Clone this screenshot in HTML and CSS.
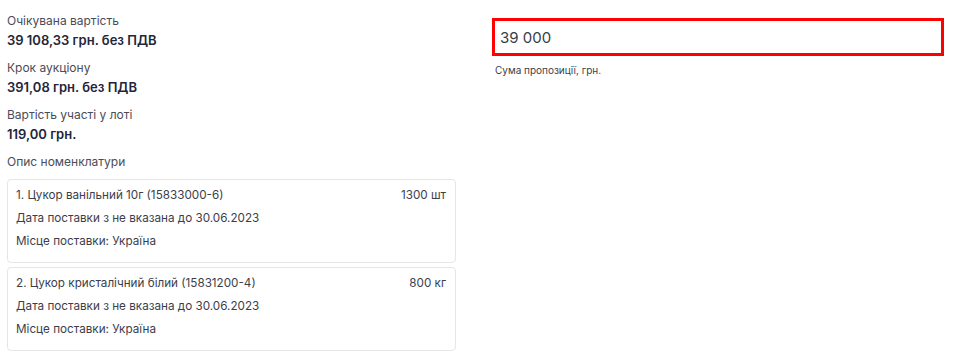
FILE: index.html
```html
<!DOCTYPE html>
<html lang="uk">
<head>
    <meta charset="UTF-8">
    <title>Пропозиція</title>
    <link rel="stylesheet" href="styles.css">
</head>
<body>

<div class="layout">
    <div class="lot-info">
        <div class="field">
            <div class="field-label">Очікувана вартість</div>
            <div class="field-value">39 108,33 грн. без ПДВ</div>
        </div>
        <div class="field">
            <div class="field-label">Крок аукціону</div>
            <div class="field-value">391,08 грн. без ПДВ</div>
        </div>
        <div class="field">
            <div class="field-label">Вартість участі у лоті</div>
            <div class="field-value">119,00 грн.</div>
        </div>

        <div class="field-label items-title">Опис номенклатури</div>

        <div class="item-card">
            <div class="item-row">
                <span>1. Цукор ванільний 10г (15833000-6)</span>
                <span>1300 шт</span>
            </div>
            <div class="item-row">Дата поставки з не вказана до 30.06.2023</div>
            <div class="item-row">Місце поставки: Україна</div>
        </div>

        <div class="item-card">
            <div class="item-row">
                <span>2. Цукор кристалічний білий (15831200-4)</span>
                <span>800 кг</span>
            </div>
            <div class="item-row">Дата поставки з не вказана до 30.06.2023</div>
            <div class="item-row">Місце поставки: Україна</div>
        </div>
    </div>

    <div class="bid-form">
        <input type="text" class="bid-input" id="bidAmount" value="39 000">
        <label for="bidAmount" class="bid-hint">Сума пропозиції, грн.</label>
    </div>
</div>

</body>
</html>
```

FILE: styles.css
```css
body {
    font-family: Inter, "Noto Sans", sans-serif;
    background-color: #fff;
    color: #2b2d3b;
    margin: 0;
}
.layout {
    display: grid;
    grid-template-columns: 449px 452px;
    column-gap: 36px;
    padding: 12px 9px 0 7px;
}
.field {
    margin-bottom: 9px;
}
.field-label {
    font-size: 12px;
    line-height: 18px;
    color: #4a4c57;
}
.field-value {
    font-size: 13px;
    line-height: 20px;
    font-weight: 600;
    color: #23253a;
}
.items-title {
    margin-bottom: 8px;
}
.item-card {
    border: 1px solid #e6e6ea;
    border-radius: 4px;
    padding: 4px 9px 9px 8px;
    margin-bottom: 4px;
}
.item-row {
    display: flex;
    justify-content: space-between;
    font-size: 11.7px;
    line-height: 23px;
    color: #3c3e4a;
}
.bid-form {
    padding-top: 6px;
}
.bid-input {
    display: block;
    width: 100%;
    box-sizing: border-box;
    height: 38px;
    border: 3px solid #ff0000;
    padding: 0 5px;
    font-family: inherit;
    font-size: 15px;
    color: #3a3c48;
    outline: none;
}
.bid-hint {
    display: block;
    margin-top: 8px;
    margin-left: 3px;
    font-size: 10px;
    color: #3c3e4a;
}
```
